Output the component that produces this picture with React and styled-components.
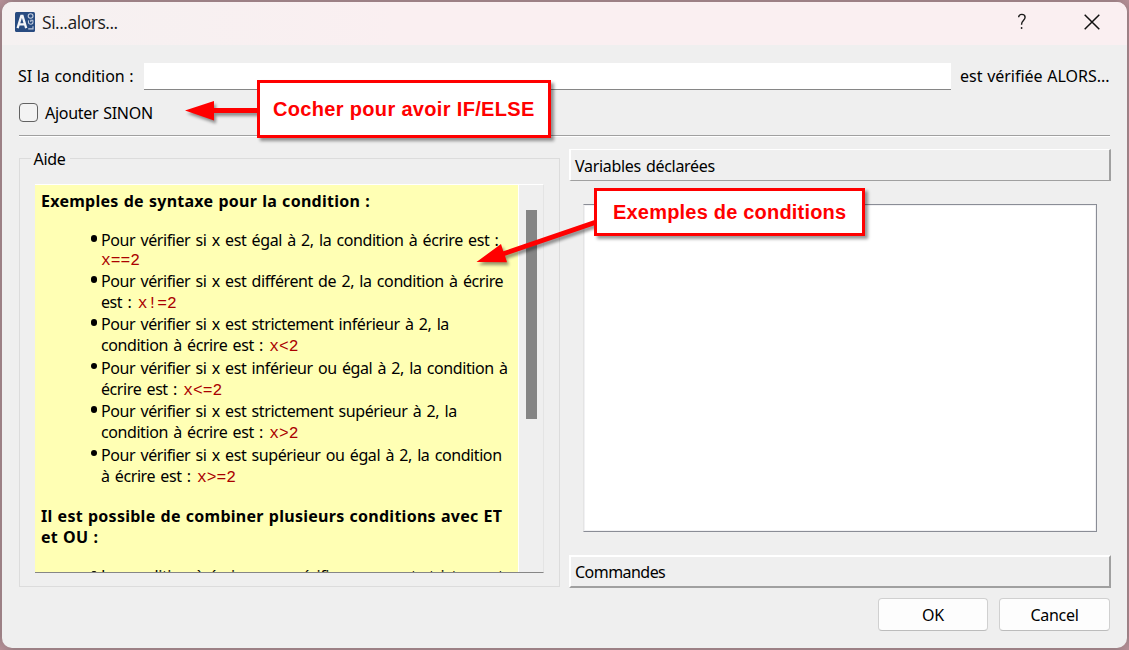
import React from 'react';
import styled, { createGlobalStyle } from 'styled-components';

const Global = createGlobalStyle`
  * { box-sizing: border-box; }
  body {
    margin: 0;
    font: 16px/21px "Noto Sans", "DejaVu Sans Condensed", sans-serif;
    letter-spacing: -0.3px;
    word-spacing: 1.15px;
    color: #000;
  }
`;

const Desktop = styled.div`
  position: relative;
  width: 1129px;
  height: 650px;
  padding: 2px;
  overflow: hidden;
  background:
    radial-gradient(circle at 0 0, #b58f96, transparent 14px),
    radial-gradient(circle at 100% 0, #b58f96, transparent 14px),
    radial-gradient(circle at 0 100%, #b58f96, transparent 14px),
    radial-gradient(circle at 100% 100%, #b58f96, transparent 14px),
    #9c8085;
`;

const Window = styled.main`
  display: flex;
  flex-direction: column;
  height: 646px;
  overflow: hidden;
  border-radius: 10px;
  background: #efefef;
`;

const TitleBar = styled.header`
  display: flex;
  align-items: center;
  flex: none;
  height: 43px;
  padding: 0 27px 3px 13px;
  background: linear-gradient(90deg, #f5f1f1, #faeff1 35%);
`;

const Title = styled.h1`
  flex: 1;
  margin: 0 0 0 7px;
  font: 400 17.5px/24px "Open Sans", sans-serif;
  letter-spacing: -0.47px;
  color: #1b1b1b;
`;

const WindowButton = styled.button`
  display: flex;
  padding: 0;
  border: 0;
  background: none;
  margin-left: ${(p) => p.$gap || 0}px;
`;

const Content = styled.div`
  flex: 1;
  display: flex;
  flex-direction: column;
  padding: 18px 17px 17px;
`;

const ConditionRow = styled.div`
  display: flex;
  align-items: center;
  height: 27px;
  margin-left: -1px;
`;

const RowLabel = styled.label`
  flex: none;
  width: ${(p) => p.$width}px;
  letter-spacing: ${(p) => p.$spacing}px;
  word-spacing: 0.6px;
  white-space: nowrap;
`;

const ConditionInput = styled.input`
  flex: none;
  width: 807px;
  height: 27px;
  margin: 0 9px 0 0;
  padding: 0 4px;
  border: 0;
  border-bottom: 1px solid #868686;
  background: #fff;
  font: inherit;
  outline: 0;
`;

const CheckRow = styled.label`
  display: flex;
  align-items: center;
  gap: 7px;
  height: 21px;
  margin-top: 13px;
`;

const CheckBox = styled.span`
  width: 19px;
  height: 19px;
  margin-top: -3px;
  border: 1px solid #626262;
  border-radius: 4px;
  background: #f3f3f3;
`;

const Separator = styled.hr`
  width: 1091px;
  height: 2px;
  margin: 11px 0 0;
  border: 0;
  border-top: 1px solid #a0a0a0;
  background: #fff;
`;

const Columns = styled.div`
  display: grid;
  grid-template-columns: 541px 542px;
  column-gap: 9px;
  height: 451px;
`;

const GroupBox = styled.fieldset`
  height: 438px;
  min-width: 0;
  margin: 12px 0 0;
  padding: 17px 15px 13px;
  border: 1px solid #dcdcdc;
`;

const Legend = styled.legend`
  height: 18px;
  margin-left: -4px;
  padding: 0 4px 0 2.5px;
  line-height: 20px;
`;

const HelpArea = styled.section`
  display: flex;
  height: 389px;
  border-top: 1px solid #fff;
  border-right: 1px solid #e4e4e4;
  border-bottom: 1px solid #868686;
`;

const HelpText = styled.div`
  width: 484px;
  padding: 6px 0 0 6px;
  overflow: hidden;
  background: #ffffb4;
  border-right: 1px solid #fff;
  white-space: nowrap;
`;

const HelpHeading = styled.h2`
  margin: 0;
  font-size: 16px;
  line-height: 21px;
  font-weight: 700;
  letter-spacing: 0.27px;
  word-spacing: 0.6px;
`;

const Examples = styled.ul`
  margin: 18px 0;
  padding: 0 0 0 60px;
  list-style: none;
  letter-spacing: -0.42px;
  word-spacing: 1.55px;
`;

const Example = styled.li`
  position: relative;
  height: ${(p) => p.$height || 43.5}px;

  &::before {
    content: '';
    position: absolute;
    left: -10.5px;
    top: 5px;
    width: 6.5px;
    height: 6.5px;
    border-radius: 50%;
    background: #000;
  }
`;

const Line = styled.div`
  line-height: ${(p) => (p.$tight ? 16 : 21)}px;
`;

const Code = styled.code`
  margin-left: ${(p) => (p.$inline ? 1 : 0)}px;
  font-family: "Liberation Mono", monospace;
  font-size: 16.25px;
  line-height: 16px;
  letter-spacing: 0;
  word-spacing: 0;
  color: #aa0000;
`;

const ScrollBar = styled.div`
  flex: 1;
  padding: 25px 0 0 7px;
`;

const Thumb = styled.div`
  width: 11px;
  height: 209px;
  background: #858585;
`;

const Toolbox = styled.section`
  display: flex;
  flex-direction: column;
  padding-top: 12px;
`;

const ToolboxTab = styled.h3`
  flex: none;
  height: ${(p) => p.$height}px;
  margin: 0;
  padding: ${(p) => p.$pad}px 0 0 4px;
  border-style: solid;
  border-color: #fff #a0a0a0 #a0a0a0 #fff;
  border-width: ${(p) => p.$border};
  font-size: 16px;
  font-weight: 400;
  line-height: 21px;
  letter-spacing: ${(p) => p.$spacing}px;
`;

const VariableList = styled.div`
  height: 328px;
  margin: 23px 14px;
  border: 1px solid #8a8d96;
  border-left-color: #e4e4e4;
  background: #fff;
  box-shadow: inset 0 0 0 1px #f1f1f3;
`;

const Buttons = styled.footer`
  display: flex;
  justify-content: flex-end;
  gap: 11px;
  margin: 10px 0 0;
`;

const DialogButton = styled.button`
  width: ${(p) => p.$width}px;
  height: 33px;
  padding: 2px 0 0;
  border: 1px solid #d0d0d0;
  border-bottom-color: #bcbcbc;
  border-radius: 4px;
  background: #fdfdfd;
  font: inherit;
  letter-spacing: -0.3px;
  color: #000;
`;

const Callout = styled.div`
  position: absolute;
  left: ${(p) => p.$x}px;
  top: ${(p) => p.$y}px;
  width: ${(p) => p.$width}px;
  height: ${(p) => p.$height}px;
  padding-left: ${(p) => p.$pad}px;
  border: 3px solid #f00;
  background: #fff;
  box-shadow: 3px 3px 3px rgba(0, 0, 0, 0.4);
  font: 700 20px/${(p) => p.$height - 6}px "Liberation Sans", Arial, sans-serif;
  letter-spacing: ${(p) => p.$spacing}px;
  word-spacing: 0;
  white-space: nowrap;
  color: #f00;
`;

const Arrows = styled.svg`
  position: absolute;
  left: 0;
  top: 0;
  pointer-events: none;
  filter: drop-shadow(2px 3px 1.5px rgba(0, 0, 0, 0.4));
`;

const EXAMPLES = [
  ['Pour vérifier si x est égal à 2, la condition à écrire est :', '', 'x==2', 41],
  ['Pour vérifier si x est différent de 2, la condition à écrire', 'est : ', 'x!=2', 43],
  ['Pour vérifier si x est strictement inférieur à 2, la', 'condition à écrire est : ', 'x<2'],
  ['Pour vérifier si x est inférieur ou égal à 2, la condition à', 'écrire est : ', 'x<=2'],
  ['Pour vérifier si x est strictement supérieur à 2, la', 'condition à écrire est : ', 'x>2'],
  ['Pour vérifier si x est supérieur ou égal à 2, la condition', 'à écrire est : ', 'x>=2'],
];

const LogoIcon = () => (
  <svg width="20" height="20" viewBox="0 0 20 20">
    <rect width="20" height="20" rx="1.5" fill="#284b80" />
    <path d="M2.6 16.2 6.3 4h1.200l3.700 12.200M4.200 12.300h5.400" fill="none" stroke="#f4f5f8" strokeWidth="2.300" />
    <g fill="none" stroke="#c3cddd" strokeWidth="1.100">
      <path d="M13.200 16.900h4.800v-2.600" />
      <path d="M13.700 8.300c-.9 2.900.2 3.900 1.900 3.900s3-1 2.200-3.900h-2v1.800" />
      <ellipse cx="15.600" cy="4" rx="2.400" ry="2.200" />
    </g>
  </svg>
);

const HelpIcon = () => (
  <svg width="10" height="18" viewBox="0 0 10 18" fill="none" stroke="#1b1b1b">
    <path d="M1.600 4.300C1.800 2.300 3 1.400 4.800 1.400c2 0 3.300 1.100 3.300 2.900 0 2.900-3.500 3.500-3.500 6.700v.8" strokeWidth="1.400" />
    <circle cx="4.600" cy="15" r=".9" fill="#1b1b1b" stroke="none" />
  </svg>
);

const CloseIcon = () => (
  <svg width="16" height="16" viewBox="0 0 16 16" fill="none" stroke="#111" strokeWidth="1.500">
    <path d="m.7.7 14.600 14.600M15.300.7.7 15.300" />
  </svg>
);

export default function App() {
  return (
    <Desktop>
      <Global />
      <Window>
        <TitleBar>
          <LogoIcon />
          <Title>Si...alors...</Title>
          <WindowButton aria-label="Aide"><HelpIcon /></WindowButton>
          <WindowButton aria-label="Fermer" $gap={57}><CloseIcon /></WindowButton>
        </TitleBar>
        <Content>
          <ConditionRow>
            <RowLabel $width={126} $spacing={-0.06}>SI la condition :</RowLabel>
            <ConditionInput />
            <RowLabel $width={150} $spacing={-0.02}>est vérifiée ALORS...</RowLabel>
          </ConditionRow>
          <CheckRow>
            <CheckBox />
            Ajouter SINON
          </CheckRow>
          <Separator />
          <Columns>
            <GroupBox>
              <Legend>Aide</Legend>
              <HelpArea>
                <HelpText>
                  <HelpHeading>Exemples de syntaxe pour la condition :</HelpHeading>
                  <Examples>
                    {EXAMPLES.map(([first, rest, code, height]) => (
                      <Example key={code} $height={height}>
                        <Line>{first}</Line>
                        <Line $tight={!rest}>
                          {rest}
                          <Code $inline={!!rest}>{code}</Code>
                        </Line>
                      </Example>
                    ))}
                  </Examples>
                  <HelpHeading>
                    Il est possible de combiner plusieurs conditions avec ET
                    <br />
                    et OU :
                  </HelpHeading>
                  <Examples>
                    <Example>
                      <Line>La condition à écrire pour vérifier que x est strictement</Line>
                    </Example>
                  </Examples>
                </HelpText>
                <ScrollBar><Thumb /></ScrollBar>
              </HelpArea>
            </GroupBox>
            <Toolbox>
              <ToolboxTab $height={32} $pad={6} $border="1px 2px 1px 2px" $spacing={-0.3}>
                Variables déclarées
              </ToolboxTab>
              <VariableList />
              <ToolboxTab $height={33} $pad={5} $border="2px 2px 2px 2px" $spacing={-0.54}>
                Commandes
              </ToolboxTab>
            </Toolbox>
          </Columns>
          <Buttons>
            <DialogButton $width={110}>OK</DialogButton>
            <DialogButton $width={111}>Cancel</DialogButton>
          </Buttons>
        </Content>
      </Window>
      <Arrows width="1129" height="650" viewBox="0 0 1129 650" fill="#f00">
        <path d="M185 110.500 214 101v7h45v5h-45v7.500z" />
        <path d="m476.500 262 24.500-18 2.300 7.300L596 219.500l1.500 4.800-92.500 31.500 2 6.500z" />
      </Arrows>
      <Callout $x={257} $y={80} $width={294} $height={58} $pad={13} $spacing={0.33}>
        Cocher pour avoir IF/ELSE
      </Callout>
      <Callout $x={594} $y={188} $width={271} $height={48} $pad={16} $spacing={0.2}>
        Exemples de conditions
      </Callout>
    </Desktop>
  );
}
